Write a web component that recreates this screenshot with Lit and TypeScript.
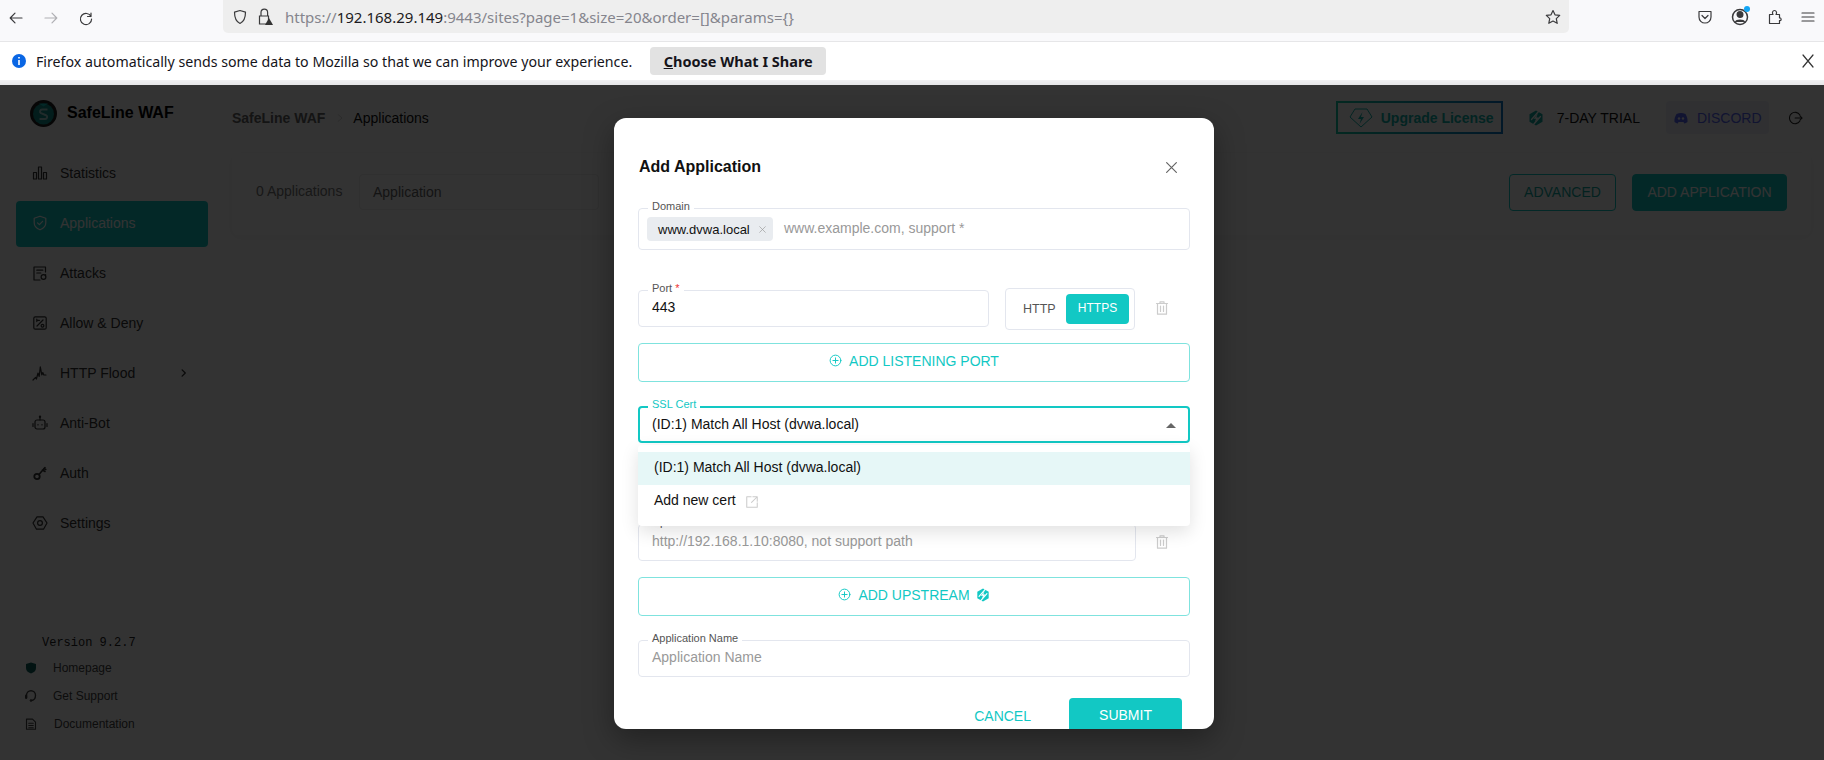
import { LitElement, html, css, svg } from 'lit'
import { customElement } from 'lit/decorators.js'

const icon = (size: number, body: unknown, cls = '') => html`
  <svg class="ico ${cls}" width=${size} height=${size} viewBox="0 0 16 16" fill="none" stroke="currentColor" stroke-width="1.2" stroke-linecap="round" stroke-linejoin="round">${body}</svg>
`

const trash = svg`<path d="M2.500 3.500h11M6 3.500V1.800h4v1.700M3.500 3.500v10.700h9V3.500M6.500 6v5.500M9.500 6v5.500"/>`
const plusCircle = svg`<circle cx="8" cy="8" r="6.600"/><path d="M8 4.800v6.400M4.800 8h6.400"/>`
const bolt = svg`<path d="M8 .6l6.500 3.700v7.400L8 15.400l-6.500-3.700V4.300z" fill="currentColor" stroke="none"/><path d="M10.500 1.500L3.500 9.500 M12.500 6.500L5.500 14.500" stroke="#fff" stroke-width="1.300"/><path d="M9.800 3.500L5.500 8.800h2.500L6.500 12.800l4.300-5.400H8.300z" fill="#fff" stroke="none"/>`

const navItems = [
  { label: 'Statistics', icon: svg`<path d="M1.500 7.500h3v6.500h-3zM6.500 2h3v12h-3zM11.500 7.500h3v6.500h-3z"/>` },
  { label: 'Applications', active: true, icon: svg`<path d="M8 1.200l5.800 2v4.600c0 3.400-2.500 5.800-5.800 7-3.300-1.200-5.800-3.600-5.800-7V3.200z"/><path d="M5.500 7.800l1.900 1.900 3.200-3.400"/>` },
  { label: 'Attacks', icon: svg`<path d="M13.500 7V2H2v13h6M4.800 5.200h6M4.800 8h4"/><circle cx="11.500" cy="12" r="2.400"/><path d="M13.500 9.500v1.500"/>` },
  { label: 'Allow & Deny', icon: svg`<rect x="1.800" y="1.800" width="12.400" height="12.400" rx="1.500"/><path d="M5 11l6-6M5 5.400h2.400M4.800 4v2.600"/><circle cx="10.500" cy="10.800" r="1.400"/>` },
  { label: 'HTTP Flood', chevron: true, icon: svg`<path d="M1 15l2.600-2.600.8 1.600L6 8l1.200 3.500L8.300 1.800l1.500 8 1-2.300 1 2.500h2.200"/>` },
  { label: 'Anti-Bot', icon: svg`<rect x="3" y="5" width="10" height="9" rx="2"/><path d="M8 5V2.200M1 8.500v3M15 8.500v3M6 9.500v.5M10 9.500v.5"/><circle cx="8" cy="1.800" r=".6"/>` },
  { label: 'Auth', icon: svg`<circle cx="5" cy="11.500" r="2.700" stroke-width="1.800"/><path d="M7 9.500l6-7M10.500 5l2.500 1.500M11.800 3.500l2 1" stroke-width="1.600"/>` },
  { label: 'Settings', icon: svg`<path d="M5 1.800h6L15 8l-3.500 6.200h-7L1 8z"/><circle cx="8" cy="8" r="2.400"/>` }
]

@customElement('app-root')
export class AppRoot extends LitElement {
  static styles = css`
    * {
      box-sizing: border-box;
    }
    :host {
      display: block;
      height: 760px;
      overflow: hidden;
      font-family: 'Liberation Sans', Arial, sans-serif;
      font-size: 14px;
      color: #111;
      background: #fff;
    }
    .ico {
      display: block;
      flex: none;
    }

    /* browser chrome */
    .toolbar {
      height: 42px;
      display: flex;
      background: #f9f9fb;
      border-bottom: 1px solid #e6e6e8;
      color: #3a3a3c;
    }
    .nav-btns {
      width: 223px;
      display: flex;
      align-items: center;
      gap: 19px;
      padding: 0 0 5px 8px;
    }
    .nav-btns .off {
      color: #b0b0b4;
    }
    .urlbar {
      width: 1346px;
      height: 33px;
      background: #eeeeee;
      border-radius: 0 0 5px 5px;
      display: flex;
      align-items: center;
      padding: 0 8px 0 9px;
      gap: 10px;
    }
    .url {
      flex: 1;
      margin-left: 1px;
      font-family: 'Noto Sans', sans-serif;
      font-size: 15px;
      color: #85858d;
      white-space: nowrap;
    }
    .url b {
      font-weight: 400;
      color: #1c1b22;
    }
    .tools {
      flex: 1;
      display: flex;
      align-items: center;
      gap: 17px;
      padding: 0 0 8px 128px;
    }
    .badge {
      position: relative;
    }
    .badge::after {
      content: '';
      position: absolute;
      right: 0;
      top: -1px;
      width: 6px;
      height: 6px;
      border-radius: 50%;
      background: #12a5f4;
    }
    .infobar {
      height: 38px;
      background: #fff;
      display: flex;
      align-items: center;
      padding: 0 8px 0 12px;
      font-family: 'Noto Sans', sans-serif;
      font-size: 14.2px;
      color: #15141a;
    }
    .infobar .msg {
      margin-left: 10px;
    }
    .infobar button {
      margin-left: 18px;
      width: 176px;
      height: 28px;
      border: 0;
      border-radius: 4px;
      background: #e2e2e2;
      font: 700 14.5px 'Noto Sans', sans-serif;
      color: #15141a;
    }
    .infobar .x {
      margin-left: auto;
      color: #333;
    }
    .strip {
      height: 5px;
      background: linear-gradient(#f0f0f2, #e6e6e8);
    }

    /* app page under the overlay */
    .page {
      position: relative;
      height: 675px;
      display: flex;
      background: #fff;
    }
    .sidebar {
      width: 232px;
      flex: none;
      display: flex;
      flex-direction: column;
    }
    .brand {
      height: 56px;
      display: flex;
      align-items: center;
      gap: 10px;
      padding: 0 0 0 30px;
      font-size: 16px;
      font-weight: 700;
      color: #000;
    }
    .menu {
      display: flex;
      flex-direction: column;
      gap: 4px;
      margin: 9px 0 0 16px;
      width: 192px;
    }
    .menu a {
      height: 46px;
      display: flex;
      align-items: center;
      gap: 12px;
      padding: 0 16px;
      border-radius: 4px;
      color: #333;
    }
    .menu a.active {
      margin: 1px 0 -1px;
      padding-bottom: 2px;
      background: #12c8c4;
      color: #fff;
    }
    .menu .more {
      margin-left: auto;
      margin-right: 3px;
    }
    .version {
      margin: auto 0 0 42px;
      font: 12px 'Liberation Mono', monospace;
      color: #222;
      line-height: 14px;
    }
    .links {
      display: flex;
      flex-direction: column;
      gap: 14px;
      margin: 11px 0 29px 25px;
      font-size: 12px;
      color: #444;
      line-height: 14px;
    }
    .links div {
      display: flex;
      align-items: center;
      gap: 16px;
    }
    .links div:last-child {
      gap: 17px;
    }
    .links .shield {
      color: #0b5f5c;
    }

    .main {
      flex: 1;
      padding-right: 13px;
    }
    .header {
      height: 68px;
      display: flex;
      align-items: center;
      padding-bottom: 3px;
    }
    .crumb {
      font-weight: 700;
      color: #666;
    }
    .sep {
      margin: 0 9px 0 11px;
      color: #bbb;
    }
    .right {
      margin-left: auto;
      margin-right: 8px;
      display: flex;
      align-items: center;
    }
    .upgrade {
      width: 167px;
      height: 33px;
      display: flex;
      align-items: center;
      gap: 8px;
      padding-left: 11px;
      border: 2px solid;
      border-image: linear-gradient(90deg, #12c8a4, #0a78c8) 1;
      color: #10b4ac;
      font-weight: 700;
    }
    .trial {
      display: flex;
      align-items: center;
      gap: 13px;
      margin-left: 25px;
      color: #111;
    }
    .trial .ico {
      color: #12a8a0;
    }
    .discord {
      width: 103px;
      height: 33px;
      margin-left: 26px;
      display: flex;
      align-items: center;
      gap: 9px;
      padding-left: 8px;
      border-radius: 4px;
      background: #eef0fb;
      color: #5865f2;
    }
    .logout {
      margin-left: 20px;
      color: #222;
    }
    .card {
      height: 82px;
      display: flex;
      align-items: flex-start;
      padding: 21px 24px 0;
      border-radius: 6px;
      background: #fff;
      box-shadow: 0 2px 12px rgba(0, 0, 0, 0.05);
    }
    .count {
      width: 103px;
      line-height: 34px;
      color: #777;
    }
    .search {
      width: 240px;
      height: 36px;
      padding: 0 13px;
      line-height: 34px;
      border: 1px solid #eee;
      border-radius: 4px;
      color: #666;
    }
    .btn {
      height: 37px;
      line-height: 35px;
      text-align: center;
      border: 1px solid #12c8c4;
      border-radius: 4px;
      color: #12a8a0;
    }
    .btn.adv {
      width: 107px;
      margin-left: auto;
    }
    .btn.add {
      width: 155px;
      margin-left: 16px;
      background: #12c8c4;
      color: #fff;
    }

    /* modal */
    .overlay {
      position: absolute;
      inset: 0;
      background: rgba(0, 0, 0, 0.8);
    }
    .modal {
      position: absolute;
      left: 614px;
      top: 33px;
      width: 600px;
      height: 611px;
      overflow: hidden;
      padding: 37px 24px 0;
      background: #fff;
      border-radius: 12px;
      box-shadow: 0 10px 30px rgba(0, 0, 0, 0.35);
    }
    .title {
      height: 24px;
      display: flex;
      align-items: center;
      justify-content: space-between;
      padding: 0 12px 0 1px;
      font-size: 16px;
      font-weight: 700;
      color: #111;
    }
    .title .ico {
      color: #666;
    }
    .field {
      position: relative;
      height: 37px;
      display: flex;
      align-items: center;
      padding: 0 13px 3px;
      border: 1px solid #e3e6ee;
      border-radius: 4px;
      color: #111;
    }
    .field > label {
      position: absolute;
      left: 9px;
      top: -9px;
      padding: 0 4px;
      background: #fff;
      font-size: 11px;
      line-height: 13px;
      color: #555;
    }
    label i {
      font-style: normal;
      color: #e33;
    }
    .placeholder {
      color: #999;
    }
    .domain {
      height: 42px;
      margin-top: 29px;
      padding: 0 8px;
    }
    .domain .placeholder {
      margin: 0 0 2px 1px;
    }
    .chip {
      width: 126px;
      height: 24px;
      display: flex;
      align-items: center;
      justify-content: space-between;
      padding: 0 6px 0 11px;
      margin-right: 10px;
      border-radius: 4px;
      background: #e9ecf0;
      font-size: 13px;
      color: #111;
    }
    .chip .ico {
      color: #999;
    }
    .row {
      display: flex;
      align-items: center;
    }
    .row .field {
      flex: none;
    }
    .ports {
      margin-top: 38px;
      height: 42px;
    }
    .port {
      width: 351px;
      margin-bottom: 1px;
    }
    .toggle {
      width: 130px;
      height: 42px;
      margin-left: 16px;
      display: flex;
      align-items: center;
      padding: 0 5px 0 17px;
      border: 1px solid #e3e6ee;
      border-radius: 4px;
      font-size: 12.5px;
      color: #555;
    }
    .toggle b {
      width: 63px;
      height: 30px;
      margin-left: auto;
      line-height: 29px;
      text-align: center;
      font-weight: 400;
      font-size: 12px;
      border-radius: 4px;
      background: #12c8c4;
      color: #fff;
    }
    .del {
      margin: 0 0 2px 19px;
      color: #ccc;
    }
    .dashed {
      height: 39px;
      display: flex;
      align-items: center;
      justify-content: center;
      gap: 7px;
      border: 1px solid #7fe3de;
      border-radius: 4px;
      color: #12c8c4;
      padding-bottom: 4px;
    }
    .listen {
      margin-top: 13px;
    }
    .ssl {
      margin-top: 24px;
      border: 2px solid #12c8c4;
      padding: 0 12px 2px;
    }
    .ssl > label {
      color: #12c8c4;
      left: 8px;
      top: -10px;
    }
    .caret {
      margin: 3px 0 0 auto;
      width: 0;
      height: 0;
      border: 5px solid transparent;
      border-top: 0;
      border-bottom: 5px solid #666;
    }
    .dropdown {
      position: absolute;
      z-index: 2;
      left: -2px;
      right: -2px;
      top: 37px;
      height: 81px;
      padding-top: 7px;
      background: #fff;
      border-radius: 4px;
      box-shadow: 0 6px 18px rgba(0, 0, 0, 0.12);
    }
    .dropdown div {
      height: 33px;
      display: flex;
      align-items: center;
      gap: 9px;
      padding: 0 16px 3px;
      color: #111;
    }
    .dropdown .sel {
      background: #e6f7f7;
    }
    .dropdown .ico {
      color: #ccc;
      margin-top: 3px;
    }
    .upstream {
      margin-top: 81px;
    }
    .upstream .field {
      width: 498px;
    }
    .upstream .del {
      margin-left: 18px;
    }
    .add-up {
      margin-top: 16px;
    }
    .add-up .ico:last-child {
      margin-left: -1px;
      margin-top: 1px;
    }
    .name {
      margin-top: 24px;
    }
    .footer {
      margin-top: 21px;
      padding-right: 8px;
      display: flex;
      justify-content: flex-end;
      align-items: center;
      color: #12c8c4;
    }
    .footer button {
      width: 113px;
      height: 36px;
      margin-left: 38px;
      padding-bottom: 3px;
      border: 0;
      border-radius: 4px;
      background: #12c8c4;
      color: #fff;
      font: 14px 'Liberation Sans', Arial, sans-serif;
    }
  `

  private chrome() {
    return html`
      <div class="toolbar">
        <div class="nav-btns">
          ${icon(16, svg`<path d="M14 8H2.500M7 3.200L2.200 8 7 12.800"/>`)}
          ${icon(16, svg`<path d="M2 8h11.500M9 3.200L13.800 8 9 12.800"/>`, 'off')}
          ${icon(16, svg`<path d="M13 3v3.500H9.500M13 6.500A5.600 5.600 0 1 0 13.600 9"/>`)}
        </div>
        <div class="urlbar">
          ${icon(16, svg`<path d="M8 1.500l5.500 1.600c0 5-1 9.500-5.500 11.400C3.500 12.600 2.500 8.100 2.500 3.100z"/>`)}
          <svg class="ico" width="16" height="18" viewBox="0 0 16 18" fill="none" stroke="currentColor" stroke-width="1.200">
            <path d="M3 8V4.500a3.300 3.300 0 0 1 6.600 0V8M1.500 8h9v8h-9z"/>
            <path d="M11 10l4 7H7z" fill="#333" stroke="none"/>
          </svg>
          <div class="url">https://<b>192.168.29.149</b>:9443/sites?page=1&amp;size=20&amp;order=[]&amp;params={}</div>
          ${icon(16, svg`<path d="M8 1.500l2 4.300 4.700.6-3.400 3.200.9 4.700L8 12l-4.200 2.300.9-4.700L1.300 6.400 6 5.800z"/>`)}
        </div>
        <div class="tools">
          ${icon(16, svg`<path d="M2 2.500h12V8c0 3.500-2.700 6-6 6s-6-2.500-6-6z"/><path d="M5 6.500L8 9.500l3-3"/>`)}
          <div class="badge">
            ${icon(20, svg`<circle cx="8" cy="8" r="6"/><circle cx="8" cy="6" r="2.200" fill="currentColor"/><path d="M4.500 12c.8-2 6.200-2 7 0" fill="currentColor"/>`)}
          </div>
          ${icon(16, svg`<path d="M2.500 14.500V5.500H6c-1-1.500-.5-4 1.500-4S10 4 9 5.500h3.500v3.500c1.800-.8 2.500 3.200 0 2.500v3z"/>`)}
          ${icon(16, svg`<path d="M2 4h12M2 8h12M2 12h12"/>`)}
        </div>
      </div>
      <div class="infobar">
        <svg class="ico" width="14" height="14" viewBox="0 0 14 14">
          <circle cx="7" cy="7" r="7" fill="#0a66e4"/>
          <path d="M6.200 6h1.600v5H6.200zM6.200 3h1.600v1.600H6.200z" fill="#fff"/>
        </svg>
        <span class="msg">Firefox automatically sends some data to Mozilla so that we can improve your experience.</span>
        <button><u>C</u>hoose What I Share</button>
        <span class="x">${icon(16, svg`<path d="M3 2l10 12M13 2L3 14"/>`)}</span>
      </div>
      <div class="strip"></div>
    `
  }

  private sidebar() {
    return html`
      <div class="sidebar">
        <div class="brand">
          <svg class="ico" width="27" height="27" viewBox="0 0 27 27" fill="none">
            <circle cx="13.500" cy="13.500" r="13.500" fill="#222"/>
            <circle cx="13.500" cy="14" r="10.500" fill="#0f8f8a"/>
            <path d="M9 3.500h9l-4.500 3z" fill="#12c8c4"/>
            <path d="M17.500 9.500h-5.500a2 2 0 0 0-1 3.700l5 2a2 2 0 0 1-1 3.800H9.500" stroke="#a8d8d6" stroke-width="2"/>
          </svg>
          SafeLine WAF
        </div>
        <div class="menu">
          ${navItems.map(
            (n) => html`
              <a class=${n.active ? 'active' : ''}>
                ${icon(16, n.icon)} ${n.label}
                ${n.chevron ? icon(10, svg`<path d="M5 3l5 5-5 5" stroke-width="2.200"/>`, 'more') : ''}
              </a>
            `
          )}
        </div>
        <div class="version">Version 9.2.7</div>
        <div class="links">
          <div>
            <svg class="ico shield" width="12" height="12" viewBox="0 0 12 12">
              <path d="M6 .5l5 1.500v4c0 2.800-2 4.500-5 5.500-3-1-5-2.700-5-5.500V2z" fill="currentColor"/>
            </svg>
            Homepage
          </div>
          <div>
            ${icon(12, svg`<path d="M2 10V7a6 6 0 0 1 12 0c0 4-2 6.500-5 7" stroke-width="1.800"/><circle cx="8" cy="14" r="1.200" fill="currentColor"/><path d="M1.500 7.500v3" stroke-width="3"/>`)}
            Get Support
          </div>
          <div>
            ${icon(12, svg`<path d="M2 1.500h8l4 4V15H2zM5 7h6M5 10h6M5 13h6" stroke-width="1.500"/>`)}
            Documentation
          </div>
        </div>
      </div>
    `
  }

  private main() {
    return html`
      <div class="main">
        <div class="header">
          <span class="crumb">SafeLine WAF</span>
          <span class="sep">${icon(8, svg`<path d="M4 1l8 7-8 7"/>`)}</span>
          <span>Applications</span>
          <div class="right">
            <div class="upgrade">
              <svg class="ico" width="24" height="22" viewBox="0 0 24 22" fill="none" stroke="currentColor">
                <path d="M6 2h12l5 8-11 10L1 10z"/>
                <path d="M13.500 5L9 12h3l-1.500 5 4.500-7h-3z" fill="currentColor" stroke="none"/>
              </svg>
              Upgrade License
            </div>
            <div class="trial">${icon(16, bolt)} 7-DAY TRIAL</div>
            <div class="discord">
              <svg class="ico" width="14" height="14" viewBox="0 0 14 14">
                <path d="M2.500 3c3-1.300 6-1.300 9 0 1.500 2.500 2.300 5 2 8-1 .8-2.200 1.300-3.300 1.500L9.500 11h-5l-.7 1.500C2.700 12.300 1.500 11.800.5 11c-.3-3 .5-5.500 2-8z" fill="currentColor"/>
                <circle cx="5" cy="7.500" r="1.200" fill="#eef0fb"/>
                <circle cx="9" cy="7.500" r="1.200" fill="#eef0fb"/>
              </svg>
              DISCORD
            </div>
            <div class="logout">
              ${icon(14, svg`<path d="M12.500 4.500A6.500 6.500 0 1 0 12.500 11.500M7 8h8M12.500 5.500L15 8l-2.500 2.500"/>`)}
            </div>
          </div>
        </div>
        <div class="card">
          <div class="count">0 Applications</div>
          <div class="search">Application</div>
          <div class="btn adv">ADVANCED</div>
          <div class="btn add">ADD APPLICATION</div>
        </div>
      </div>
    `
  }

  private modal() {
    return html`
      <div class="modal">
        <div class="title">
          Add Application
          ${icon(13, svg`<path d="M2 2l12 12M14 2L2 14" stroke-width="1.500"/>`)}
        </div>
        <div class="field domain">
          <label>Domain</label>
          <span class="chip">www.dvwa.local ${icon(9, svg`<path d="M3 3l10 10M13 3L3 13"/>`)}</span>
          <span class="placeholder">www.example.com, support *</span>
        </div>
        <div class="row ports">
          <div class="field port"><label>Port <i>*</i></label>443</div>
          <div class="toggle">HTTP<b>HTTPS</b></div>
          <span class="del">${icon(16, trash)}</span>
        </div>
        <div class="dashed listen">${icon(13, plusCircle)} ADD LISTENING PORT</div>
        <div class="field ssl">
          <label>SSL Cert</label>
          (ID:1) Match All Host (dvwa.local)
          <span class="caret"></span>
          <div class="dropdown">
            <div class="sel">(ID:1) Match All Host (dvwa.local)</div>
            <div>
              Add new cert
              ${icon(14, svg`<path d="M7 2H2v12h12V9M9 2h5v5M14 2L7.500 8.500"/>`)}
            </div>
          </div>
        </div>
        <div class="row upstream">
          <div class="field"><label>Upstream</label><span class="placeholder">http://192.168.1.10:8080, not support path</span></div>
          <span class="del">${icon(16, trash)}</span>
        </div>
        <div class="dashed add-up">${icon(13, plusCircle)} ADD UPSTREAM ${icon(14, bolt)}</div>
        <div class="field name">
          <label>Application Name</label>
          <span class="placeholder">Application Name</span>
        </div>
        <div class="footer">
          CANCEL
          <button>SUBMIT</button>
        </div>
      </div>
    `
  }

  render() {
    return html`
      ${this.chrome()}
      <div class="page">
        ${this.sidebar()} ${this.main()}
        <div class="overlay"></div>
        ${this.modal()}
      </div>
    `
  }
}
